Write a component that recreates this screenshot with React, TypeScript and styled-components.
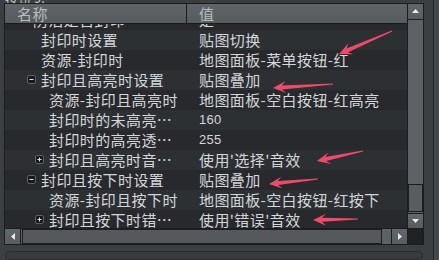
import React from "react";
import styled, { createGlobalStyle } from "styled-components";

const Global = createGlobalStyle`
  html, body { margin: 0; padding: 0; background: #3c3f42; }
  body {
    width: 439px; height: 260px; overflow: hidden;
    font-family: "Noto Sans CJK SC", "Noto Sans", sans-serif;
  }
`;

const Page = styled.div`
  position: relative;
  display: flex;
  width: 439px;
  height: 260px;
  overflow: hidden;
  background: #3c3f42;
`;

const Main = styled.div`
  width: 433px;
  flex: none;
  border-right: 1px solid #27292b;
  display: flex;
  flex-direction: column;
`;

const Side = styled.div`
  flex: 1;
  background: #45484b;
`;

const Caption = styled.div`
  height: 6px;
  overflow: hidden;
  display: flex;
  align-items: flex-end;
  padding-left: 5px;
  font-size: 13px;
  color: #c3c7ca;
  span { line-height: 13px; margin-bottom: -1px; }
`;

const Table = styled.div`
  margin-left: 4px;
  width: 420px;
  box-sizing: border-box;
  border: 1px solid #1a1c1e;
  display: grid;
  grid-template-columns: 402px 16px;
  grid-template-rows: 224px 16px;
`;

const Content = styled.div`
  display: flex;
  flex-direction: column;
  min-height: 0;
`;

const Header = styled.div`
  height: 19px;
  flex: none;
  display: grid;
  grid-template-columns: 182px 1fr;
  border-bottom: 1px solid #1a1c1e;
  background: linear-gradient(#5f6468, #575b5f);
`;

const HeaderCell = styled.div<{ $divider?: boolean }>`
  box-sizing: border-box;
  padding-left: 12px;
  line-height: 19px;
  font-size: 15px;
  letter-spacing: 0.4px;
  color: #b9bdc1;
  border-right: ${(p) => (p.$divider ? "1px solid #1a1c1e" : "none")};
`;

const Body = styled.div`
  flex: 1;
  overflow: hidden;
  background: #2a2d30;
`;

const Rows = styled.div`
  transform: translateY(-14px);
`;

const Row = styled.div<{ $alt: boolean }>`
  height: 20px;
  display: grid;
  grid-template-columns: 182px 1fr;
  background: ${(p) => (p.$alt ? "#2d3033" : "#27292c")};
  color: #d3d7da;
  font-size: 15px;
  letter-spacing: 0.4px;
  line-height: 20px;
  white-space: nowrap;
`;

const NameCell = styled.div<{ $level: number }>`
  display: flex;
  align-items: center;
  padding-left: ${(p) => 14 + p.$level * 8}px;
  overflow: hidden;
`;

const ToggleSlot = styled.span`
  width: 14px;
  flex: none;
  display: flex;
  align-items: center;
`;

const ValueCell = styled.div<{ $numeric?: boolean }>`
  padding-left: 12px;
  overflow: hidden;
  font-family: ${(p) =>
    p.$numeric ? '"Liberation Sans", sans-serif' : "inherit"};
  font-size: ${(p) => (p.$numeric ? "13px" : "15px")};
  letter-spacing: ${(p) => (p.$numeric ? "0.3px" : "0.4px")};
`;

const VBar = styled.div`
  grid-column: 2;
  grid-row: 1;
  border-left: 1px solid #1a1c1e;
  display: flex;
  flex-direction: column;
  background: #5d6165;
`;

const ArrowBtn = styled.div<{ $edge: "top" | "bottom" | "left" | "right" }>`
  flex: none;
  display: flex;
  align-items: center;
  justify-content: center;
  background: linear-gradient(#62676b, #585c60);
  ${(p) =>
    p.$edge === "top"
      ? "height: 15px; border-bottom: 1px solid #1a1c1e;"
      : p.$edge === "bottom"
      ? "height: 14px; border-top: 1px solid #1a1c1e;"
      : p.$edge === "left"
      ? "width: 15px; border-right: 1px solid #1a1c1e;"
      : "width: 15px; border-left: 1px solid #1a1c1e;"}
`;

const VTrack = styled.div`
  flex: 1;
  display: flex;
  flex-direction: column;
  justify-content: flex-end;
  padding-bottom: 1px;
`;

const VThumb = styled.div`
  height: 28px;
  box-sizing: border-box;
  border: 1px solid #1c1e20;
  background: #595d61;
`;

const HBar = styled.div`
  grid-column: 1;
  grid-row: 2;
  border-top: 1px solid #1a1c1e;
  display: flex;
  background: #5d6165;
`;

const HTrack = styled.div`
  flex: 1;
  display: flex;
  padding-left: 1px;
`;

const HThumb = styled.div`
  width: 360px;
  box-sizing: border-box;
  border: 1px solid #1c1e20;
  background: #55595d;
`;

const Corner = styled.div`
  grid-column: 2;
  grid-row: 2;
  border-left: 1px solid #1a1c1e;
  border-top: 1px solid #1a1c1e;
  background: #1f2123;
`;

const BottomPanel = styled.div`
  margin-top: 6px;
  margin-left: 5px;
  width: 418px;
  height: 20px;
  box-sizing: border-box;
  border: 1px solid #2a2c2f;
  border-radius: 4px;
  background: #383b3e;
`;

const Overlay = styled.svg`
  position: absolute;
  left: 0;
  top: 0;
  pointer-events: none;
`;

type Item = {
  name: string;
  value: string;
  level: number;
  toggle?: "minus" | "plus";
  numeric?: boolean;
};

const items: Item[] = [
  { name: "防治是否封印", value: "是", level: 0 },
  { name: "封印时设置", value: "贴图切换", level: 1 },
  { name: "资源-封印时", value: "地图面板-菜单按钮-红", level: 1 },
  { name: "封印且高亮时设置", value: "贴图叠加", level: 1, toggle: "minus" },
  { name: "资源-封印且高亮时", value: "地图面板-空白按钮-红高亮", level: 2 },
  { name: "封印时的未高亮…", value: "160", level: 2, numeric: true },
  { name: "封印时的高亮透…", value: "255", level: 2, numeric: true },
  { name: "封印且高亮时音…", value: "使用'选择'音效", level: 2, toggle: "plus" },
  { name: "封印且按下时设置", value: "贴图叠加", level: 1, toggle: "minus" },
  { name: "资源-封印且按下时", value: "地图面板-空白按钮-红按下", level: 2 },
  { name: "封印且按下时错…", value: "使用'错误'音效", level: 2, toggle: "plus" },
];

const ToggleIcon = ({ kind }: { kind: "minus" | "plus" }) => (
  <svg width="9" height="9" viewBox="0 0 9 9">
    <rect x="0.5" y="0.5" width="8" height="8" rx="1.5" fill="#17191b" stroke="#5d6165" />
    <line x1="2.5" y1="4.5" x2="6.5" y2="4.5" stroke="#e2e4e6" strokeWidth="1" />
    {kind === "plus" && (
      <line x1="4.5" y1="2.5" x2="4.5" y2="6.5" stroke="#e2e4e6" strokeWidth="1" />
    )}
  </svg>
);

const Tri = ({ dir }: { dir: "up" | "down" | "left" | "right" }) => {
  const pts =
    dir === "up"
      ? "0,4 7,4 3.5,0"
      : dir === "down"
      ? "0,0 7,0 3.5,4"
      : dir === "left"
      ? "4,0 4,7 0,3.5"
      : "0,0 0,7 4,3.5";
  const w = dir === "up" || dir === "down" ? 7 : 4;
  const h = dir === "up" || dir === "down" ? 4 : 7;
  return (
    <svg width={w} height={h} viewBox={`0 0 ${w} ${h}`}>
      <polygon points={pts} fill="#e8e9ea" />
    </svg>
  );
};

const arrowPoints = (x1: number, y1: number, x2: number, y2: number) => {
  const dx = x2 - x1;
  const dy = y2 - y1;
  const len = Math.hypot(dx, dy);
  const ux = dx / len;
  const uy = dy / len;
  const nx = -uy;
  const ny = ux;
  const barbBack = 13;
  const barbW = 6;
  const neckBack = 9;
  const neckW = 2;
  const p = (bx: number, w: number) =>
    `${(x2 - ux * bx + nx * w).toFixed(1)},${(y2 - uy * bx + ny * w).toFixed(1)}`;
  return [
    `${(x1 + nx * 0.4).toFixed(1)},${(y1 + ny * 0.4).toFixed(1)}`,
    p(neckBack, neckW),
    p(barbBack, barbW),
    `${x2},${y2}`,
    p(barbBack, -barbW),
    p(neckBack, -neckW),
    `${(x1 - nx * 0.4).toFixed(1)},${(y1 - ny * 0.4).toFixed(1)}`,
  ].join(" ");
};

const arrows: [number, number, number, number][] = [
  [392, 31, 339, 54],
  [333, 84, 273, 88],
  [363, 151, 317, 161],
  [318, 179, 269, 184],
  [358, 219, 313, 220],
];

export default function App() {
  return (
    <>
      <Global />
      <Page>
        <Main>
          <Caption>
            <span>按钮 9:</span>
          </Caption>
          <Table>
            <Content>
              <Header>
                <HeaderCell $divider>名称</HeaderCell>
                <HeaderCell>值</HeaderCell>
              </Header>
              <Body>
                <Rows>
                  {items.map((it, i) => (
                    <Row key={i} $alt={i % 2 === 1}>
                      <NameCell $level={it.level}>
                        <ToggleSlot>{it.toggle && <ToggleIcon kind={it.toggle} />}</ToggleSlot>
                        <span>{it.name}</span>
                      </NameCell>
                      <ValueCell $numeric={it.numeric}>{it.value}</ValueCell>
                    </Row>
                  ))}
                </Rows>
              </Body>
            </Content>
            <VBar>
              <ArrowBtn $edge="top">
                <Tri dir="up" />
              </ArrowBtn>
              <VTrack>
                <VThumb />
              </VTrack>
              <ArrowBtn $edge="bottom">
                <Tri dir="down" />
              </ArrowBtn>
            </VBar>
            <HBar>
              <ArrowBtn $edge="left">
                <Tri dir="left" />
              </ArrowBtn>
              <HTrack>
                <HThumb />
              </HTrack>
              <ArrowBtn $edge="right">
                <Tri dir="right" />
              </ArrowBtn>
            </HBar>
            <Corner />
          </Table>
          <BottomPanel />
        </Main>
        <Side />
        <Overlay width="439" height="260" viewBox="0 0 439 260">
          {arrows.map((a, i) => (
            <polygon key={i} points={arrowPoints(a[0], a[1], a[2], a[3])} fill="#f04a6a" />
          ))}
        </Overlay>
      </Page>
    </>
  );
}
